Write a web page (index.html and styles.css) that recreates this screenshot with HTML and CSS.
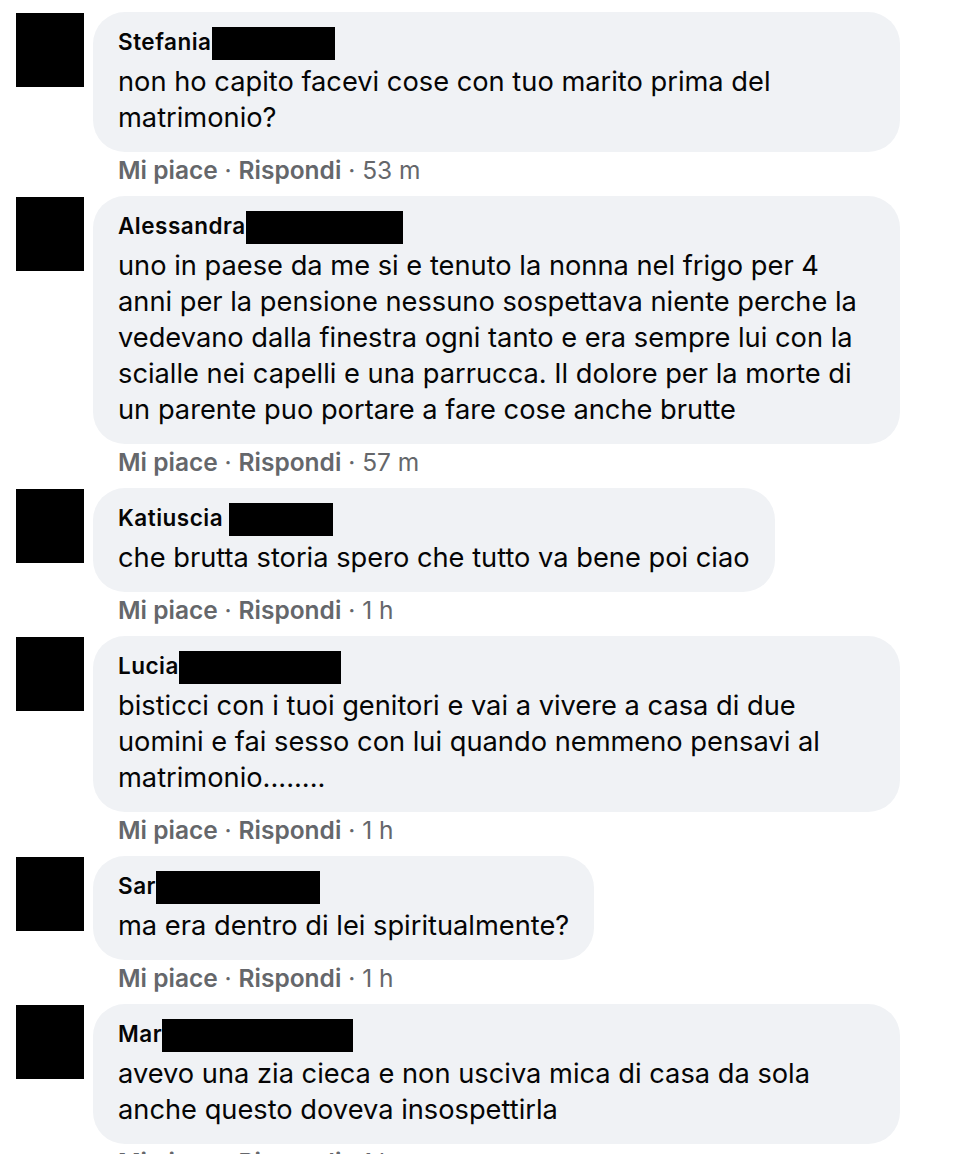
FILE: index.html
```html
<!DOCTYPE html>
<html lang="it">
<head>
    <meta charset="UTF-8">
    <meta name="viewport" content="width=device-width, initial-scale=1.0">
    <title>Commenti</title>
    <link rel="stylesheet" href="styles.css">
</head>
<body>
    <div class="commenti">
        <div class="commento">
            <div class="avatar"></div>
            <div class="corpo">
                <div class="bolla">
                    <div class="nome">Stefania<span class="censura" style="width: 123px"></span></div>
                    <div class="testo">non ho capito facevi cose con tuo marito prima del matrimonio?</div>
                </div>
                <div class="azioni"><b>Mi piace</b> · <b>Rispondi</b> · 53 m</div>
            </div>
        </div>

        <div class="commento">
            <div class="avatar"></div>
            <div class="corpo">
                <div class="bolla">
                    <div class="nome">Alessandra<span class="censura" style="width: 157px"></span></div>
                    <div class="testo">uno in paese da me si e tenuto la nonna nel frigo per 4 anni per la pensione nessuno sospettava niente perche la vedevano dalla finestra ogni tanto e era sempre lui con la scialle nei capelli e una parrucca. Il dolore per la morte di un parente puo portare a fare cose anche brutte</div>
                </div>
                <div class="azioni"><b>Mi piace</b> · <b>Rispondi</b> · 57 m</div>
            </div>
        </div>

        <div class="commento">
            <div class="avatar"></div>
            <div class="corpo">
                <div class="bolla">
                    <div class="nome">Katiuscia <span class="censura" style="width: 104px"></span></div>
                    <div class="testo">che brutta storia spero che tutto va bene poi ciao</div>
                </div>
                <div class="azioni"><b>Mi piace</b> · <b>Rispondi</b> · 1 h</div>
            </div>
        </div>

        <div class="commento">
            <div class="avatar"></div>
            <div class="corpo">
                <div class="bolla">
                    <div class="nome">Lucia<span class="censura" style="width: 162px"></span></div>
                    <div class="testo">bisticci con i tuoi genitori e vai a vivere a casa di due uomini e fai sesso con lui quando nemmeno pensavi al matrimonio........</div>
                </div>
                <div class="azioni"><b>Mi piace</b> · <b>Rispondi</b> · 1 h</div>
            </div>
        </div>

        <div class="commento">
            <div class="avatar"></div>
            <div class="corpo">
                <div class="bolla">
                    <div class="nome">Sar<span class="censura" style="width: 164px"></span></div>
                    <div class="testo">ma era dentro di lei spiritualmente?</div>
                </div>
                <div class="azioni"><b>Mi piace</b> · <b>Rispondi</b> · 1 h</div>
            </div>
        </div>

        <div class="commento">
            <div class="avatar"></div>
            <div class="corpo">
                <div class="bolla">
                    <div class="nome">Mar<span class="censura" style="width: 191px"></span></div>
                    <div class="testo">avevo una zia cieca e non usciva mica di casa da sola anche questo doveva insospettirla</div>
                </div>
                <div class="azioni"><b>Mi piace</b> · <b>Rispondi</b> · 1 h</div>
            </div>
        </div>
    </div>
</body>
</html>
```

FILE: styles.css
```css
/* Variabili */
:root {
    --fonte: 'Inter', 'Roboto', sans-serif;
    --cor-testo: #050505;
    --cor-bolla: #f0f2f5;
    --cor-grigio: #65676b;
}

body {
    margin: 0;
    background: #ffffff;
    font-family: var(--fonte);
    color: var(--cor-testo);
}

.commenti {
    padding: 12px 0 0 16px;
}

.commento {
    display: flex;
    align-items: flex-start;
    gap: 9px;
    margin-bottom: 12px;
}

.avatar {
    flex: none;
    width: 68px;
    height: 74px;
    margin-top: 1px;
    background: #000000;
}

.corpo {
    display: flex;
    flex-direction: column;
    align-items: flex-start;
}

.bolla {
    max-width: 757px;
    padding: 12px 25px 16px;
    background: var(--cor-bolla);
    border-radius: 32px;
}

.nome {
    font-size: 22.5px;
    font-weight: 600;
    letter-spacing: 0.5px;
    line-height: 36px;
    height: 36px;
    white-space: nowrap;
}

.censura {
    display: inline-block;
    height: 33px;
    margin-top: 3px;
    vertical-align: top;
    background: #000000;
}

.testo {
    margin-top: 4px;
    font-size: 27.25px;
    line-height: 36px;
}

.azioni {
    margin-top: 4px;
    margin-left: 25px;
    font-size: 24.5px;
    line-height: 28px;
    color: var(--cor-grigio);
}

.azioni b {
    font-weight: 600;
}
```
